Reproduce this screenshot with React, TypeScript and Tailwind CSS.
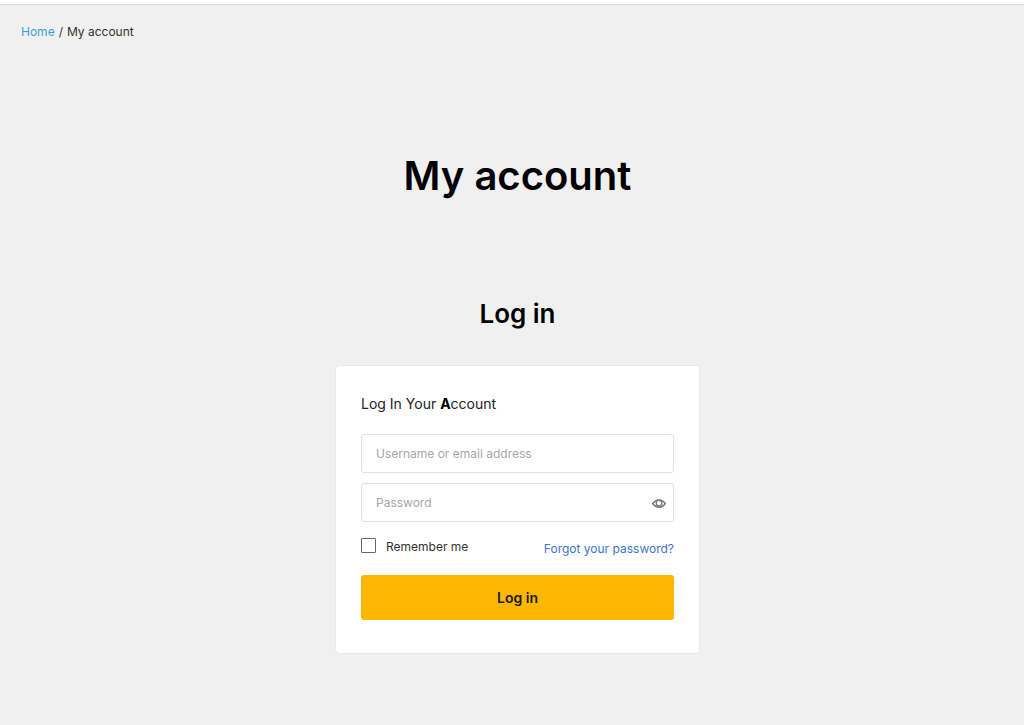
import { useState } from "react";

const inputClass =
  "h-[39px] w-full rounded-[3px] border border-[#e0e0e0] bg-white pl-3.5 text-xs text-[#222222] outline-none placeholder:text-[#a6a6a6] focus:border-[#fdb700]";

const EyeIcon = () => (
  <svg width="14" height="10" viewBox="0 0 14 10" fill="none" aria-hidden="true">
    <path
      d="M0.7 5.500C2.4 3.200 4.500 2 7 2S11.600 3.200 13.300 5.500C11.600 8 9.500 9.200 7 9.200S2.400 8 0.700 5.500Z"
      stroke="#777777"
      strokeWidth="1.400"
    />
    <circle cx="7" cy="5.200" r="2.800" stroke="#777777" strokeWidth="1.300" />
  </svg>
);

const Breadcrumb = () => (
  <nav aria-label="Breadcrumb">
    <ol className="flex gap-1 text-xs leading-5 text-[#333333]">
      <li>
        <a href="#" className="text-[#3fa0cf]">
          Home
        </a>
      </li>
      <li aria-hidden="true">/</li>
      <li>My account</li>
    </ol>
  </nav>
);

const LoginForm = () => {
  const [showPassword, setShowPassword] = useState(false);

  return (
    <form
      onSubmit={(e) => e.preventDefault()}
      className="mt-[35px] w-full max-w-[365px] rounded border border-[#e9e9e9] bg-white px-[25px] pt-7 pb-[33px]"
    >
      <p className="text-sm leading-5 text-[#222222]">
        Log In Your <b className="font-bold text-black">A</b>ccount
      </p>
      <div className="mt-5 flex flex-col gap-2.5">
        <input
          type="text"
          name="username"
          aria-label="Username or email address"
          placeholder="Username or email address"
          className={`${inputClass} pr-3.5`}
        />
        <div className="relative">
          <input
            type={showPassword ? "text" : "password"}
            name="password"
            aria-label="Password"
            placeholder="Password"
            className={`${inputClass} pr-8`}
          />
          <button
            type="button"
            aria-label="Show password"
            onClick={() => setShowPassword(!showPassword)}
            className="absolute inset-y-0 right-2 flex items-center"
          >
            <EyeIcon />
          </button>
        </div>
      </div>
      <div className="mt-4 flex items-start justify-between text-xs leading-[18px]">
        <label className="flex items-start gap-2.5 text-[#333333]">
          <input
            type="checkbox"
            name="remember"
            className="size-[15px] appearance-none rounded-[1px] border border-[#666666] bg-white checked:bg-[#fdb700]"
          />
          Remember me
        </label>
        <a href="#" className="pt-0.5 text-[#3f73c8]">
          Forgot your password?
        </a>
      </div>
      <button
        type="submit"
        className="mt-[17px] h-[45px] w-full rounded-[3px] bg-[#fdb700] text-sm font-semibold text-[#1a1a1a]"
      >
        Log in
      </button>
    </form>
  );
};

const App = () => {
  return (
    <div className="flex min-h-screen flex-col bg-[#f0f0f0] font-['Inter',sans-serif]">
      <header className="h-[5px] border-b border-[#e2e2e2] bg-white" />
      <main className="flex-1 pt-[17px] pr-2.5 pb-16 pl-[21px]">
        <Breadcrumb />
        <div className="flex flex-col items-center">
          <h1 className="mt-[110px] text-[40px] leading-12 font-semibold text-black">
            My account
          </h1>
          <h2 className="mt-[98px] text-[26px] leading-8 font-semibold text-black">
            Log in
          </h2>
          <LoginForm />
        </div>
      </main>
    </div>
  );
};

export default App;
